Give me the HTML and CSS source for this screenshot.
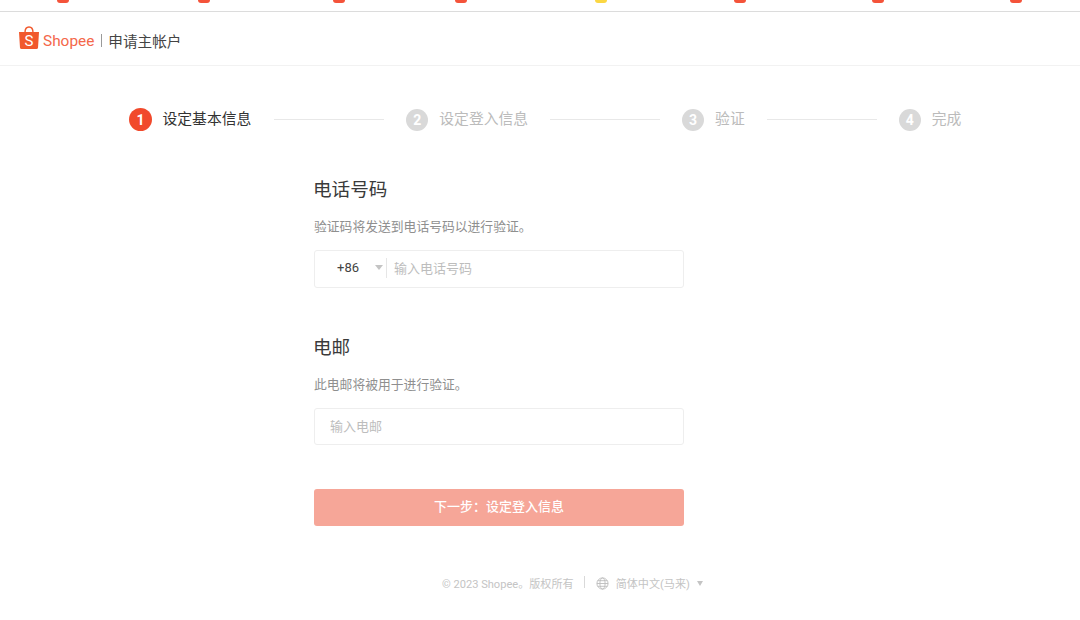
FILE: index.html
```html
<!DOCTYPE html>
<html lang="zh-CN">
<head>
    <meta charset="UTF-8">
    <meta name="viewport" content="width=device-width, initial-scale=1.0">
    <title>申请主帐户</title>
    <link rel="stylesheet" href="styles.css">
</head>
<body>
    <div class="tab-strip">
        <span class="fav"></span><span class="fav"></span><span class="fav"></span><span class="fav"></span>
        <span class="fav fav-yellow"></span><span class="fav"></span><span class="fav"></span><span class="fav"></span>
    </div>
    <header class="topbar">
        <svg class="bag" viewBox="0 0 22 24" width="22" height="24">
            <path d="M7 6.5 C7 3 8.8 1 11 1 C13.2 1 15 3 15 6.5" fill="none" stroke="#f1582c" stroke-width="1.4"/>
            <path d="M1 6 H21 L20 21.5 Q19.9 23 18.4 23 H3.6 Q2.1 23 2 21.5 Z" fill="#f1582c"/>
            <text x="11" y="19.5" class="bag-letter" text-anchor="middle">S</text>
        </svg>
        <span class="brand">Shopee</span>
        <span class="brand-divider"></span>
        <span class="page-name">申请主帐户</span>
    </header>

    <div class="steps">
        <div class="step active"><span class="num">1</span><span class="label">设定基本信息</span></div>
        <div class="step-line"></div>
        <div class="step"><span class="num">2</span><span class="label">设定登入信息</span></div>
        <div class="step-line"></div>
        <div class="step"><span class="num">3</span><span class="label">验证</span></div>
        <div class="step-line"></div>
        <div class="step"><span class="num">4</span><span class="label">完成</span></div>
    </div>

    <form class="form">
        <h2>电话号码</h2>
        <p>验证码将发送到电话号码以进行验证。</p>
        <div class="field phone">
            <span class="code">+86</span>
            <span class="arrow"></span>
            <span class="field-divider"></span>
            <span class="placeholder">输入电话号码</span>
        </div>

        <h2 class="second">电邮</h2>
        <p>此电邮将被用于进行验证。</p>
        <div class="field email">
            <span class="placeholder">输入电邮</span>
        </div>

        <button type="button" class="next">下一步：设定登入信息</button>
    </form>

    <footer class="footer">
        <span>© 2023 Shopee。版权所有</span>
        <span class="footer-divider"></span>
        <svg class="globe" viewBox="0 0 14 14" width="13" height="13">
            <g fill="none" stroke="#bdbdbd" stroke-width="1">
                <circle cx="7" cy="7" r="6"/>
                <ellipse cx="7" cy="7" rx="2.8" ry="6"/>
                <path d="M1 7 H13 M1.8 4 H12.2 M1.8 10 H12.2"/>
            </g>
        </svg>
        <span class="lang">简体中文(马来)</span>
        <span class="arrow footer-arrow"></span>
    </footer>
</body>
</html>
```

FILE: styles.css
```css
* {
    box-sizing: border-box;
}
body {
    margin: 0;
    background-color: #fff;
    font-family: Roboto, "Noto Sans CJK SC", sans-serif;
    color: #333;
}
.tab-strip {
    display: flex;
    height: 12px;
    border-bottom: 1px solid #dcdcdc;
    padding-left: 57px;
    overflow: hidden;
}
.fav {
    flex: none;
    width: 12px;
    height: 3px;
    margin-right: 129px;
    background-color: #f4533a;
    border-radius: 0 0 3px 3px;
}
.fav:nth-child(2) { margin-right: 123px; }
.fav:nth-child(3) { margin-right: 110px; }
.fav:nth-child(4) { margin-right: 128px; }
.fav:nth-child(5) { margin-right: 127px; }
.fav:nth-child(6) { margin-right: 126px; }
.fav:nth-child(7) { margin-right: 126px; }
.fav-yellow {
    background-color: #fbd743;
}
.topbar {
    display: flex;
    align-items: center;
    height: 54px;
    padding: 4px 0 0 18px;
    border-bottom: 1px solid #f2f2f2;
}
.bag {
    margin-top: -5px;
}
.bag-letter {
    font-family: Roboto, sans-serif;
    font-size: 15px;
    fill: #fff;
}
.brand {
    margin-left: 3px;
    font-size: 15.4px;
    color: #f4684a;
}
.brand-divider {
    width: 1px;
    height: 13px;
    margin: 0 6px 0 7px;
    background-color: #9a9a9a;
}
.page-name {
    font-size: 14.6px;
    color: #444;
}
.steps {
    display: flex;
    align-items: center;
    height: 23px;
    margin-top: 42px;
    padding-left: 129px;
    font-size: 14.8px;
    color: #bbb;
}
.step {
    display: flex;
    align-items: center;
    gap: 11px;
}
.step.active {
    gap: 10.5px;
    margin-right: 1px;
    color: #333;
}
.label {
    padding-bottom: 4px;
}
.num {
    display: flex;
    align-items: center;
    justify-content: center;
    width: 22px;
    height: 22px;
    border-radius: 50%;
    background-color: #d9d9d9;
    color: #fff;
    font-size: 14px;
    font-weight: 700;
}
.active .num {
    width: 23px;
    height: 23px;
    background-color: #f1492b;
}
.step-line {
    width: 110px;
    height: 1px;
    margin: 0 22px;
    background-color: #e8e8e8;
}
.form {
    width: 370px;
    margin: 46px 0 0 314px;
}
.form h2 {
    margin: 0 0 0 -1px;
    font-size: 18.6px;
    font-weight: 400;
    line-height: 26px;
    color: #3a3a3a;
}
.form h2.second {
    margin-top: 47px;
}
.form p {
    margin: 15px 0 14px;
    font-size: 12.8px;
    line-height: 18px;
    color: #8f8f8f;
}
.field {
    display: flex;
    align-items: center;
    width: 370px;
    height: 38px;
    padding-bottom: 3px;
    border: 1px solid #eee;
    border-radius: 3px;
    font-size: 13px;
}
.email {
    height: 37px;
    padding-left: 15px;
}
.code {
    margin-left: 22px;
    color: #444;
}
.arrow {
    width: 0;
    height: 0;
    margin-left: 16px;
    border-left: 4px solid transparent;
    border-right: 4px solid transparent;
    border-top: 5px solid #c4c4c4;
}
.field-divider {
    width: 1px;
    height: 20px;
    margin: 0 7px 0 3px;
    background-color: #e6e6e6;
}
.placeholder {
    color: #bdbdbd;
}
.next {
    display: block;
    width: 370px;
    height: 37px;
    margin-top: 44px;
    padding-bottom: 6px;
    border: none;
    border-radius: 3px;
    background-color: #f6a698;
    color: #fff;
    font-family: inherit;
    font-size: 13px;
    font-weight: 500;
}
.footer {
    display: flex;
    align-items: center;
    height: 16px;
    margin-top: 49px;
    padding-left: 442px;
    font-size: 11.1px;
    color: #c4c4c4;
}
.footer-divider {
    width: 1px;
    height: 12px;
    margin: -3px 11px 0 10px;
    background-color: #d9d9d9;
}
.lang {
    margin-left: 7px;
}
.footer-arrow {
    margin-left: 7px;
    border-left-width: 3.5px;
    border-right-width: 3.5px;
}
```
